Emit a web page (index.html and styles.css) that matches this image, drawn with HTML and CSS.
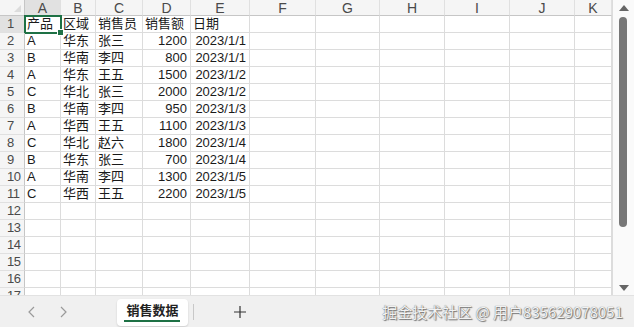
FILE: index.html
```html
<!DOCTYPE html>
<html lang="zh-CN">
<head>
  <meta charset="UTF-8" />
  <title>销售数据</title>
  <link rel="stylesheet" href="styles.css">
</head>
<body>
  <div class="app">
    <div class="sheet">
      <div class="grid">
        <div class="row head">
          <div class="cell corner"><span class="tri"></span></div>
          <div class="cell col sel">A</div><div class="cell col">B</div><div class="cell col">C</div>
          <div class="cell col">D</div><div class="cell col">E</div><div class="cell col">F</div>
          <div class="cell col">G</div><div class="cell col">H</div><div class="cell col">I</div>
          <div class="cell col">J</div><div class="cell col">K</div>
        </div>
        <div class="row">
          <div class="cell num sel">1</div>
          <div class="cell active">产品</div><div class="cell">区域</div><div class="cell">销售员</div><div class="cell">销售额</div><div class="cell">日期</div>
          <div class="cell"></div><div class="cell"></div><div class="cell"></div><div class="cell"></div><div class="cell"></div><div class="cell"></div>
        </div>
        <div class="row">
          <div class="cell num">2</div>
          <div class="cell">A</div><div class="cell">华东</div><div class="cell">张三</div><div class="cell r">1200</div><div class="cell r">2023/1/1</div>
          <div class="cell"></div><div class="cell"></div><div class="cell"></div><div class="cell"></div><div class="cell"></div><div class="cell"></div>
        </div>
        <div class="row">
          <div class="cell num">3</div>
          <div class="cell">B</div><div class="cell">华南</div><div class="cell">李四</div><div class="cell r">800</div><div class="cell r">2023/1/1</div>
          <div class="cell"></div><div class="cell"></div><div class="cell"></div><div class="cell"></div><div class="cell"></div><div class="cell"></div>
        </div>
        <div class="row">
          <div class="cell num">4</div>
          <div class="cell">A</div><div class="cell">华东</div><div class="cell">王五</div><div class="cell r">1500</div><div class="cell r">2023/1/2</div>
          <div class="cell"></div><div class="cell"></div><div class="cell"></div><div class="cell"></div><div class="cell"></div><div class="cell"></div>
        </div>
        <div class="row">
          <div class="cell num">5</div>
          <div class="cell">C</div><div class="cell">华北</div><div class="cell">张三</div><div class="cell r">2000</div><div class="cell r">2023/1/2</div>
          <div class="cell"></div><div class="cell"></div><div class="cell"></div><div class="cell"></div><div class="cell"></div><div class="cell"></div>
        </div>
        <div class="row">
          <div class="cell num">6</div>
          <div class="cell">B</div><div class="cell">华南</div><div class="cell">李四</div><div class="cell r">950</div><div class="cell r">2023/1/3</div>
          <div class="cell"></div><div class="cell"></div><div class="cell"></div><div class="cell"></div><div class="cell"></div><div class="cell"></div>
        </div>
        <div class="row">
          <div class="cell num">7</div>
          <div class="cell">A</div><div class="cell">华西</div><div class="cell">王五</div><div class="cell r">1100</div><div class="cell r">2023/1/3</div>
          <div class="cell"></div><div class="cell"></div><div class="cell"></div><div class="cell"></div><div class="cell"></div><div class="cell"></div>
        </div>
        <div class="row">
          <div class="cell num">8</div>
          <div class="cell">C</div><div class="cell">华北</div><div class="cell">赵六</div><div class="cell r">1800</div><div class="cell r">2023/1/4</div>
          <div class="cell"></div><div class="cell"></div><div class="cell"></div><div class="cell"></div><div class="cell"></div><div class="cell"></div>
        </div>
        <div class="row">
          <div class="cell num">9</div>
          <div class="cell">B</div><div class="cell">华东</div><div class="cell">张三</div><div class="cell r">700</div><div class="cell r">2023/1/4</div>
          <div class="cell"></div><div class="cell"></div><div class="cell"></div><div class="cell"></div><div class="cell"></div><div class="cell"></div>
        </div>
        <div class="row">
          <div class="cell num">10</div>
          <div class="cell">A</div><div class="cell">华南</div><div class="cell">李四</div><div class="cell r">1300</div><div class="cell r">2023/1/5</div>
          <div class="cell"></div><div class="cell"></div><div class="cell"></div><div class="cell"></div><div class="cell"></div><div class="cell"></div>
        </div>
        <div class="row">
          <div class="cell num">11</div>
          <div class="cell">C</div><div class="cell">华西</div><div class="cell">王五</div><div class="cell r">2200</div><div class="cell r">2023/1/5</div>
          <div class="cell"></div><div class="cell"></div><div class="cell"></div><div class="cell"></div><div class="cell"></div><div class="cell"></div>
        </div>
        <div class="row">
          <div class="cell num">12</div>
          <div class="cell"></div><div class="cell"></div><div class="cell"></div><div class="cell"></div><div class="cell"></div>
          <div class="cell"></div><div class="cell"></div><div class="cell"></div><div class="cell"></div><div class="cell"></div><div class="cell"></div>
        </div>
        <div class="row">
          <div class="cell num">13</div>
          <div class="cell"></div><div class="cell"></div><div class="cell"></div><div class="cell"></div><div class="cell"></div>
          <div class="cell"></div><div class="cell"></div><div class="cell"></div><div class="cell"></div><div class="cell"></div><div class="cell"></div>
        </div>
        <div class="row">
          <div class="cell num">14</div>
          <div class="cell"></div><div class="cell"></div><div class="cell"></div><div class="cell"></div><div class="cell"></div>
          <div class="cell"></div><div class="cell"></div><div class="cell"></div><div class="cell"></div><div class="cell"></div><div class="cell"></div>
        </div>
        <div class="row">
          <div class="cell num">15</div>
          <div class="cell"></div><div class="cell"></div><div class="cell"></div><div class="cell"></div><div class="cell"></div>
          <div class="cell"></div><div class="cell"></div><div class="cell"></div><div class="cell"></div><div class="cell"></div><div class="cell"></div>
        </div>
        <div class="row">
          <div class="cell num">16</div>
          <div class="cell"></div><div class="cell"></div><div class="cell"></div><div class="cell"></div><div class="cell"></div>
          <div class="cell"></div><div class="cell"></div><div class="cell"></div><div class="cell"></div><div class="cell"></div><div class="cell"></div>
        </div>
        <div class="row">
          <div class="cell num">17</div>
          <div class="cell"></div><div class="cell"></div><div class="cell"></div><div class="cell"></div><div class="cell"></div>
          <div class="cell"></div><div class="cell"></div><div class="cell"></div><div class="cell"></div><div class="cell"></div><div class="cell"></div>
        </div>
      </div>
      <div class="vscroll">
        <span class="arrow up"></span>
        <div class="thumb"></div>
        <span class="arrow down"></span>
      </div>
    </div>

    <div class="tabbar">
      <div class="nav">
        <svg width="10" height="12" viewBox="0 0 10 12"><path d="M7 1 L2 6 L7 11" fill="none" stroke="#9a9a9a" stroke-width="1.2"/></svg>
        <svg width="10" height="12" viewBox="0 0 10 12"><path d="M3 1 L8 6 L3 11" fill="none" stroke="#9a9a9a" stroke-width="1.2"/></svg>
      </div>
      <div class="tab">销售数据</div>
      <div class="sep"></div>
      <div class="add">
        <svg width="12" height="12" viewBox="0 0 12 12"><path d="M6 0 V12 M0 6 H12" stroke="#333" stroke-width="1.2"/></svg>
      </div>
      <div class="mark">掘金技术社区 @ 用户835629078051</div>
    </div>
  </div>
</body>
</html>
```

FILE: styles.css
```css
* {
  box-sizing: border-box;
}

body {
  margin: 0;
  background-color: #fff;
  font-family: "Liberation Sans", "Noto Sans CJK SC", sans-serif;
  color: #1a1a1a;
}

.app {
  display: flex;
  flex-direction: column;
  width: 634px;
  height: 327px;
  overflow: hidden;
}

.sheet {
  display: flex;
  height: 295px;
  overflow: hidden;
}

.grid {
  width: 612px;
  overflow: hidden;
}

.row {
  display: grid;
  grid-template-columns: 25px 36px 35px 47px 48px 59px 66px 64px 65px 65px 65px 37px;
  height: 17px;
}

.cell {
  position: relative;
  border-right: 1px solid #dcdcdc;
  border-bottom: 1px solid #dcdcdc;
  padding: 0 2px;
  font-size: 13px;
  line-height: 16px;
  white-space: nowrap;
  overflow: hidden;
}

.cell.r {
  text-align: right;
  padding-right: 3px;
}

.head {
  height: 16px;
}

.head .cell {
  background-color: #f5f5f5;
  border-bottom: 1px solid #c6c6c6;
  line-height: 16px;
}

.col {
  text-align: center;
  color: #4a4a4a;
  font-size: 14px !important;
  border-right-color: #e0e0e0;
}

.corner {
  border-right-color: #c6c6c6 !important;
}

.tri {
  position: absolute;
  right: 3px;
  bottom: 3px;
  border-left: 7px solid transparent;
  border-bottom: 7px solid #dcdcdc;
}

.num {
  background-color: #f5f5f5;
  color: #4a4a4a;
  padding-left: 7px;
  font-size: 13px;
  letter-spacing: -0.5px;
  border-right-color: #c6c6c6;
  border-bottom-color: #e0e0e0;
}

.sel {
  background-color: #e1e1e1 !important;
}

.active {
  overflow: visible;
}

.active::after {
  content: "";
  position: absolute;
  left: -1px;
  top: -1px;
  right: -2px;
  bottom: -2px;
  border: 2px solid #1e7145;
}

.active::before {
  content: "";
  position: absolute;
  right: -4px;
  bottom: -4px;
  width: 5px;
  height: 5px;
  background-color: #1e7145;
  border: 1px solid #fff;
  z-index: 2;
}

.vscroll {
  flex: 1;
  position: relative;
  border-left: 1px solid #dcdcdc;
  background-color: #fafafa;
}

.arrow {
  position: absolute;
  left: 6px;
  border-left: 5px solid transparent;
  border-right: 5px solid transparent;
}

.arrow.up {
  top: 5px;
  border-bottom: 6px solid #666;
}

.arrow.down {
  top: 285px;
  border-top: 6px solid #666;
}

.thumb {
  position: absolute;
  left: 6px;
  top: 17px;
  width: 8px;
  height: 210px;
  border-radius: 4px;
  background-color: #777;
}

.tabbar {
  position: relative;
  display: flex;
  align-items: center;
  height: 32px;
  background-color: #f0f0f0;
  border-top: 1px solid #e2e2e2;
}

.nav {
  display: flex;
  gap: 21px;
  padding-left: 27px;
  width: 117px;
}

.tab {
  width: 71px;
  height: 27px;
  margin-top: 2px;
  background-color: #fff;
  border-radius: 4px;
  box-shadow: 0 1px 2px rgba(0, 0, 0, 0.15);
  font-family: "Noto Sans CJK SC", sans-serif;
  font-weight: bold;
  font-size: 13px;
  line-height: 22px;
  text-align: center;
  color: #222;
  position: relative;
}

.tab::after {
  content: "";
  position: absolute;
  left: 7px;
  right: 8px;
  bottom: 4px;
  height: 2px;
  background-color: #1e7145;
}

.sep {
  width: 1px;
  height: 16px;
  margin-left: 5px;
  background-color: #c8c8c8;
}

.add {
  margin-left: 40px;
  display: flex;
}

.mark {
  position: absolute;
  right: 11px;
  top: 5px;
  font-family: "Noto Sans CJK SC", sans-serif;
  font-size: 15px;
  color: #f2f2f2;
  text-shadow: 0 0 1px #555, 1px 1px 1px #777;
}
```
